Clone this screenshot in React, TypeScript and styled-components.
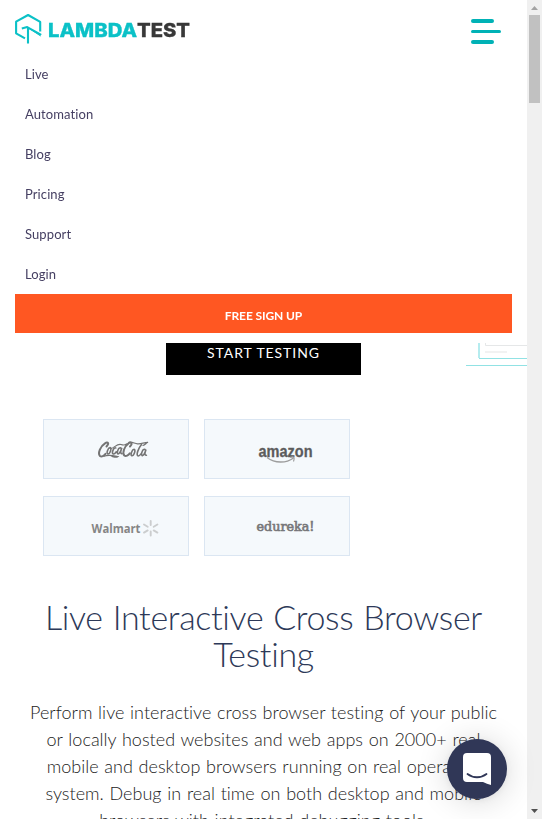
import React from "react";
import styled, { createGlobalStyle } from "styled-components";

const GlobalStyle = createGlobalStyle`
  * { box-sizing: border-box; }
  html, body { margin: 0; padding: 0; background: #fff; overflow: hidden; }
  body { font-family: Lato, "Open Sans", sans-serif; font-variant-ligatures: none; }
  h1, p { margin: 0; font-weight: 300; }
  svg { display: block; }
`;

const Window = styled.div`
  position: relative;
  display: grid;
  grid-template-columns: 1fr 15px;
  height: 819px;
  overflow: hidden;
`;

const Page = styled.div`
  min-width: 0;
  height: 819px;
  overflow: hidden;
`;

const Header = styled.header`
  height: 343px;
  padding: 0 15px 10px;
  background: #fff;
  will-change: transform;
`;

const Bar = styled.div`
  display: flex;
  justify-content: space-between;
  align-items: flex-start;
  height: 54px;
`;

const MenuButton = styled.button`
  display: flex;
  flex-direction: column;
  gap: 7px;
  width: 30px;
  margin: 19px 11px 0 0;
  padding: 0;
  border: 0;
  background: none;
`;

const Stroke = styled.span<{ $width: number }>`
  width: ${(p) => p.$width}px;
  height: 3.7px;
  border-radius: 2px;
  background: #00b2b6;
`;

const Nav = styled.nav`
  display: flex;
  flex-direction: column;
`;

const NavLink = styled.a`
  height: 40px;
  padding-left: 10px;
  font-size: 13px;
  line-height: 40px;
  letter-spacing: 0.1px;
  color: #453f62;
`;

const SignUp = styled.a`
  height: 39px;
  font-size: 12px;
  font-weight: 700;
  line-height: 43px;
  letter-spacing: -0.1px;
  text-align: center;
  color: #fff;
  background: #ff5722;
`;

const Hero = styled.section`
  display: grid;
  grid-template-columns: 166px 195px 1fr;
  height: 76px;
`;

const StartButton = styled.a`
  grid-column: 2;
  height: 32px;
  overflow: hidden;
  font-size: 14px;
  line-height: 20px;
  letter-spacing: 0.92px;
  text-align: center;
  color: #fff;
  background: #000;
`;

const Illustration = styled.svg`
  justify-self: end;
`;

const Clients = styled.div`
  display: grid;
  grid-template-columns: 146px 146px;
  grid-auto-rows: 60px;
  gap: 17px 15px;
  margin-left: 43px;
`;

const Client = styled.div`
  border: 1px solid #dbe6f2;
  background: #f5f9fc;
`;

const Title = styled.h1`
  margin-top: 42px;
  font-size: 34px;
  line-height: 37.4px;
  letter-spacing: -0.32px;
  word-spacing: 1px;
  text-align: center;
  color: #2d3958;
`;

const Lead = styled.p`
  margin-top: 26px;
  padding: 0 28px;
  font-size: 18px;
  line-height: 27px;
  letter-spacing: 0.02px;
  word-spacing: 0.8px;
  text-align: center;
  color: #222;
`;

const ScrollTrack = styled.div`
  display: flex;
  flex-direction: column;
  justify-content: space-between;
  background: #f0f0f0;
`;

const ScrollThumb = styled.div`
  width: 11px;
  height: 88px;
  margin: 0 2px;
  background: #c1c1c1;
`;

const Chat = styled.button`
  position: absolute;
  left: 447px;
  top: 739px;
  width: 60px;
  height: 60px;
  padding: 0;
  border: 0;
  border-radius: 50%;
  background: #303757;
  box-shadow: 0 1px 6px rgba(0, 0, 0, 0.06), 0 2px 32px rgba(0, 0, 0, 0.16);
`;

const Logo = () => (
  <svg width="176" height="46" viewBox="0 0 176 46" role="img" aria-label="LambdaTest">
    <g fill="none" stroke="#0bc1c7" strokeWidth="2.1" strokeLinejoin="round">
      <path d="M10 38.400 1.100 33.300V21.700L13.100 15l12.100 6.900v9.500" />
      <path d="M6.800 28.600 12.200 27.100 26.200 34.900M13 27.500V43.600" />
      <path d="M12.200 27.100 25.600 36" strokeWidth="1" />
    </g>
    <g fontFamily="Inter, sans-serif" fontWeight="800" fontSize="19.3" strokeWidth=".3">
      <text x="33" y="37" textLength="89" lengthAdjust="spacingAndGlyphs" fill="#0bc1c7" stroke="#0bc1c7">LAMBDA</text>
      <text x="122" y="37" textLength="53" lengthAdjust="spacingAndGlyphs" fill="#383838" stroke="#383838">TEST</text>
    </g>
  </svg>
);

const CocaCola = () => (
  <svg width="144" height="58" viewBox="0 0 144 58" role="img" aria-label="Coca-Cola" fill="none" stroke="#747474" strokeLinecap="round">
    <path strokeWidth="2" d="M62.500 26.500c3-3 1.500-5-1.500-3.200-4.500 2.700-7.500 10.200-5 12.700 1.700 1.400 4-.2 5.500-2.200" />
    <path strokeWidth="2" d="M86 26.500c3-3 1-5-1.500-3.200-4 2.700-6.500 9.700-4.200 12.200 1.700 1.400 4-.2 5.500-2.200" />
    <path strokeWidth="1.600" d="M66 27.500c-2 .3-4 6-2.200 6.500 2 .3 4.500-6.200 2.200-6.500M71.800 28c-1.600-1.600-4.500 4.500-2.800 5.800 1.200.7 2.500-.9 3.300-2M76.800 28c-2-1.200-4.500 4.500-2.900 5.900 1.400.7 3.400-3.900 3.900-6-1 2.700-2 5.700.2 5.700M90 29.300c-2 .3-4 6-2.200 6.500 2 .3 4.500-6.200 2.200-6.500M97.500 24.500c-3 3.500-6 11-3.300 11.500 1 0 2-1 2.500-2M101 29.500c-2-1.200-4.500 4.500-2.900 6 1.400.7 3.400-3.900 3.900-6-1 2.700-2 5.900.4 5.700" />
    <path strokeWidth="1.200" d="M66 28.500c3 1 7-5.500 11-4 2 .7 4 .7 5.500-.5M85 22.300c3-.8 5.500 1.200 8.500 1.500 4 .4 6-1.300 10.500-1.500-2 1-3 2.700-5 3.200M60 36.300c4-2 8-1 14 .2-1.500 1.200-5 .8-7-.8" />
  </svg>
);

const Amazon = () => (
  <svg width="144" height="58" viewBox="0 0 144 58" role="img" aria-label="Amazon">
    <text x="53.500" y="36.500" textLength="54" lengthAdjust="spacingAndGlyphs" fontFamily="Liberation Sans, sans-serif" fontWeight="700" fontSize="17" fill="#5c5c5c" stroke="#5c5c5c" strokeWidth=".3">amazon</text>
    <g fill="none" stroke="#9d9d9d">
      <path strokeWidth="1.500" d="M62 37.500c8 6 19 6 26.500.5" />
      <path strokeWidth="1.100" d="M85 37.300c4-1 5-.5 3.500 4.200" />
    </g>
  </svg>
);

const Walmart = () => (
  <svg width="144" height="58" viewBox="0 0 144 58" role="img" aria-label="Walmart">
    <text x="47.500" y="36" textLength="49" lengthAdjust="spacingAndGlyphs" fontFamily="Open Sans, sans-serif" fontWeight="700" fontSize="13" fill="#858585">Walmart</text>
    <path d="M106.700 24v4M106.700 34.500v4M100 27.500l3.700 2.200M109.700 33.400l3.700 2.200M100 35.600l3.700-2.200M109.700 29.700l3.700-2.200" stroke="#cbcdce" strokeWidth="1.900" strokeLinecap="round" />
  </svg>
);

const Edureka = () => (
  <svg width="144" height="58" viewBox="0 0 144 58" role="img" aria-label="edureka!">
    <text x="51.500" y="34" textLength="58" lengthAdjust="spacingAndGlyphs" fontFamily="DejaVu Serif, serif" fontWeight="400" fontSize="12" fill="#77777a" stroke="#77777a" strokeWidth=".6">edureka!</text>
  </svg>
);

const Arrow = ({ down = false }: { down?: boolean }) => (
  <svg width="15" height="15" viewBox="0 0 15 15">
    <path d={down ? "M4 5h7l-3.500 4z" : "M4 10h7L7.500 6z"} fill={down ? "#505050" : "#a3a3a3"} />
  </svg>
);

const links = ["Live", "Automation", "Blog", "Pricing", "Support", "Login"];

export default function App() {
  return (
    <>
      <GlobalStyle />
      <Window>
        <Page>
          <Header>
            <Bar>
              <Logo />
              <MenuButton aria-label="Menu">
                <Stroke $width={23} />
                <Stroke $width={30} />
                <Stroke $width={23} />
              </MenuButton>
            </Bar>
            <Nav>
              {links.map((label) => <NavLink key={label}>{label}</NavLink>)}
              <SignUp>FREE SIGN UP</SignUp>
            </Nav>
          </Header>
          <Hero>
            <StartButton>START TESTING</StartButton>
            <Illustration width="61" height="32" viewBox="0 0 61 32" fill="none">
              <path d="M19.500 0v2.500H61" stroke="#e5e7e8" />
              <path d="M19 9h22" stroke="#f2f2f2" strokeWidth="2" />
              <path d="M13 0v15" stroke="#b5ecef" strokeWidth="2" />
              <path d="M13 15.500h48M0 22.500h61" stroke="#91e2e4" />
            </Illustration>
          </Hero>
          <Clients>
            <Client><CocaCola /></Client>
            <Client><Amazon /></Client>
            <Client><Walmart /></Client>
            <Client><Edureka /></Client>
          </Clients>
          <Title>Live Interactive Cross Browser Testing</Title>
          <Lead>
            Perform live interactive cross browser testing of your public or locally hosted websites and web apps on
            2000+ real mobile and desktop browsers running on real operating system. Debug in real time on both desktop
            and mobile browsers with integrated debugging tools.
          </Lead>
        </Page>
        <ScrollTrack>
          <div>
            <Arrow />
            <ScrollThumb />
          </div>
          <Arrow down />
        </ScrollTrack>
        <Chat aria-label="Open chat">
          <svg width="60" height="60" viewBox="0 0 60 60">
            <path d="M20 14h20q4 0 4 4v28q-4-1-8-3H20q-4 0-4-4V18q0-4 4-4z" fill="#fff" />
            <path d="M20.500 35c5.500 4.300 13.500 4.300 19 0" fill="none" stroke="#303757" strokeWidth="1.800" strokeLinecap="round" />
          </svg>
        </Chat>
      </Window>
    </>
  );
}
